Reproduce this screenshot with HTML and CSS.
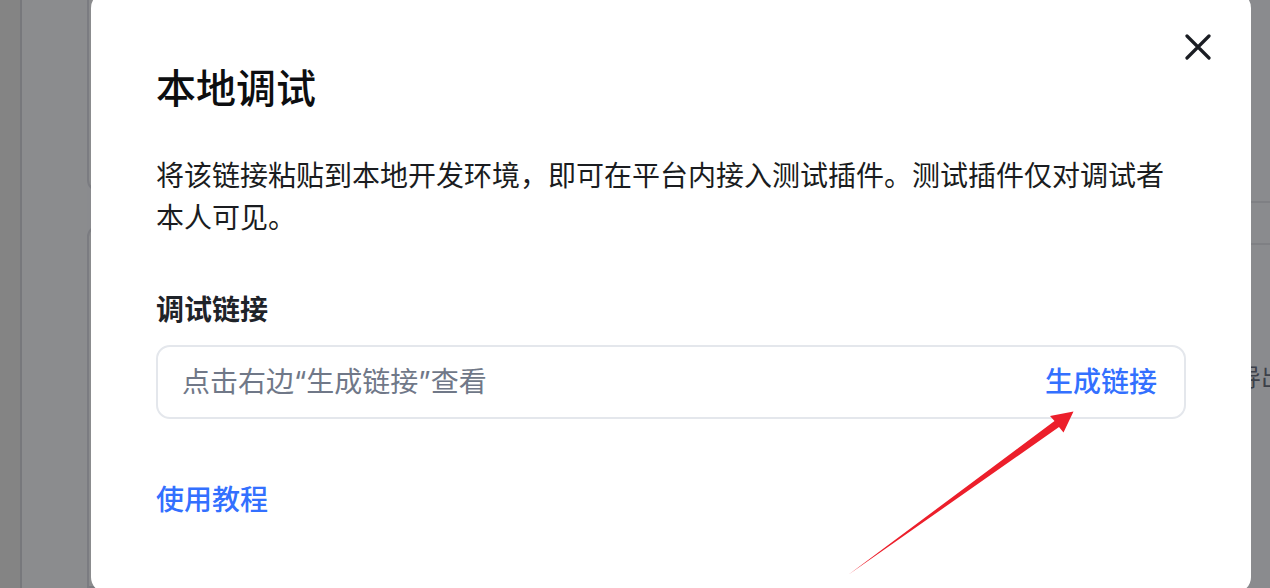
FILE: index.html
```html
<!DOCTYPE html>
<html lang="zh-CN">
<head>
<meta charset="utf-8">
<title>本地调试</title>
<link rel="stylesheet" href="styles.css">
</head>
<body>
<div class="page">
  <aside class="rail"></aside>
  <div class="gutter"></div>
  <main class="main">
    <div class="cards">
      <div class="card card-top"></div>
      <div class="card card-bottom"></div>
    </div>
    <div class="content">
      <div class="toolbar"></div>
      <div class="tabs"></div>
      <div class="row"><span class="export">导出</span></div>
    </div>
  </main>
</div>

<div class="modal" role="dialog" aria-labelledby="modal-title">
  <button class="close" aria-label="关闭">
    <svg width="26" height="26" viewBox="0 0 26 26"><path d="M2 2 L24 24 M24 2 L2 24" stroke="#1a1d23" stroke-width="3.2" stroke-linecap="round" fill="none"/></svg>
  </button>
  <h1 class="title" id="modal-title">本地调试</h1>
  <p class="desc">将该链接粘贴到本地开发环境，即可在平台内接入测试插件。测试插件仅对调试者本人可见。</p>
  <div class="label">调试链接</div>
  <div class="field">
    <span class="placeholder">点击右边“生成链接”查看</span>
    <a class="gen" href="#">生成链接</a>
  </div>
  <a class="guide" href="#">使用教程</a>
</div>

<svg class="arrow" width="1270" height="588" viewBox="0 0 1270 588">
  <polygon points="848,575 1054.5,421 1050,416 1073.5,411.5 1063.5,432.5 1059,427" fill="#ec1f2b"/>
</svg>
</body>
</html>
```

FILE: styles.css
```css
* { box-sizing: border-box; }
html, body {
  margin: 0;
  padding: 0;
  width: 1270px;
  height: 588px;
  overflow: hidden;
  font-family: "Inter", "Noto Sans CJK SC", sans-serif;
}

.page {
  display: flex;
  height: 588px;
  background: #8a8b8d;
}
.rail {
  width: 22px;
  flex: none;
  background: #848484;
  border-right: 2px solid #77787c;
}
.gutter {
  width: 65px;
  flex: none;
  background: #8b8c8e;
}
.main {
  flex: 1;
  display: flex;
  overflow: hidden;
  background: #8a8b8e;
}
.cards {
  width: 400px;
  flex: none;
  display: flex;
  flex-direction: column;
  gap: 33px;
}
.card {
  background: #8b8c8e;
  border: 2px solid #7b7c81;
}
.card-top {
  margin-top: -20px;
  height: 212px;
  border-radius: 12px;
}
.card-bottom {
  flex: 1;
  border-radius: 12px 12px 0 0;
}
.content {
  flex: 1;
  display: flex;
  flex-direction: column;
}
.toolbar {
  height: 203px;
  border-bottom: 2px solid #7f8084;
}
.tabs {
  height: 42px;
  border-bottom: 2px solid #7f8084;
}
.row {
  display: flex;
  justify-content: flex-end;
  padding-top: 118px;
  margin-right: -15px;
}
.export {
  font-size: 24px;
  line-height: 30px;
  color: #3c4049;
}

.modal {
  position: fixed;
  left: 91px;
  top: -8px;
  width: 1160px;
  height: 601px;
  background: #ffffff;
  border-radius: 16px;
  padding: 69px 65px 0;
  display: flex;
  flex-direction: column;
  align-items: flex-start;
}
.close {
  position: absolute;
  top: 42px;
  right: 40px;
  width: 26px;
  height: 26px;
  padding: 0;
  border: 0;
  background: none;
  display: flex;
}
.title {
  margin: 0;
  font-size: 40px;
  line-height: 56px;
  font-weight: 500;
  color: #0d0e10;
}
.desc {
  margin: 38px 0 0;
  font-size: 28px;
  line-height: 42px;
  color: #1a1c20;
}
.label {
  margin-top: 50px;
  font-size: 28px;
  line-height: 42px;
  font-weight: 600;
  color: #1f2329;
}
.field {
  margin-top: 14px;
  width: 100%;
  height: 74px;
  border: 2px solid #e4e7ec;
  border-radius: 14px;
  padding: 0 27px 0 24px;
  display: flex;
  align-items: center;
  justify-content: space-between;
}
.placeholder {
  font-size: 28px;
  line-height: 42px;
  color: #707888;
}
.gen, .guide {
  font-size: 28px;
  line-height: 42px;
  color: #3370ff;
  text-decoration: none;
  font-weight: 500;
}
.guide {
  margin-top: 60px;
}
.arrow {
  position: fixed;
  left: 0;
  top: 0;
  pointer-events: none;
}
```
